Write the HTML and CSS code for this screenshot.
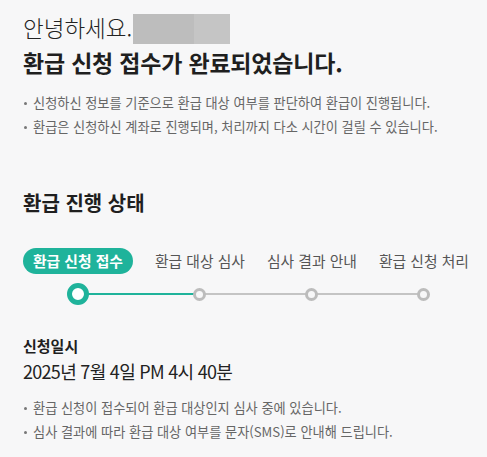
FILE: index.html
```html
<!DOCTYPE html>
<html lang="ko">
<head>
<meta charset="utf-8">
<title>환급 신청 접수</title>
<link rel="stylesheet" href="styles.css">
</head>
<body>
<main class="page">
  <div class="greeting">
    <span class="greeting-text">안녕하세요.</span>
    <span class="redact"><span class="redact-a"></span><span class="redact-b"></span></span>
  </div>
  <h1 class="title">환급 신청 접수가 완료되었습니다.</h1>
  <ul class="notes notes-top">
    <li>신청하신 정보를 기준으로 환급 대상 여부를 판단하여 환급이 진행됩니다.</li>
    <li>환급은 신청하신 계좌로 진행되며, 처리까지 다소 시간이 걸릴 수 있습니다.</li>
  </ul>

  <h2 class="section-title">환급 진행 상태</h2>
  <ol class="stepper">
    <li class="step step-active step-done">
      <span class="step-label">환급 신청 접수</span>
      <span class="step-dot-wrap"><span class="step-dot"></span></span>
    </li>
    <li class="step">
      <span class="step-label">환급 대상 심사</span>
      <span class="step-dot-wrap"><span class="step-dot"></span></span>
    </li>
    <li class="step">
      <span class="step-label">심사 결과 안내</span>
      <span class="step-dot-wrap"><span class="step-dot"></span></span>
    </li>
    <li class="step step-last">
      <span class="step-label">환급 신청 처리</span>
      <span class="step-dot-wrap"><span class="step-dot"></span></span>
    </li>
  </ol>

  <h3 class="info-label">신청일시</h3>
  <p class="info-value">2025년 7월 4일 PM 4시 40분</p>
  <ul class="notes notes-bottom">
    <li>환급 신청이 접수되어 환급 대상인지 심사 중에 있습니다.</li>
    <li>심사 결과에 따라 환급 대상 여부를 문자(SMS)로 안내해 드립니다.</li>
  </ul>
</main>
</body>
</html>
```
FILE: styles.css
```css
html, body {
  margin: 0;
  padding: 0;
  background: #f7f7f8;
}
body {
  font-family: "Noto Sans CJK KR", "Noto Sans", sans-serif;
  color: #1f1f1f;
}
.page {
  padding: 10px 23px 0 23px;
}
.greeting {
  display: flex;
  align-items: flex-start;
  height: 34px;
}
.greeting-text {
  padding-top: 2px;
  font-size: 22.5px;
  font-weight: 300;
  line-height: 30px;
  letter-spacing: 0;
  color: #222;
}
.redact {
  display: flex;
  margin-top: 4px;
  margin-left: 1px;
  height: 30px;
}
.redact-a {
  width: 61px;
  background: #bdbdbd;
}
.redact-b {
  width: 36px;
  background: #c5c5c5;
}
.title {
  margin: 3px 0 0 0;
  font-size: 23px;
  font-weight: 700;
  line-height: 30px;
  letter-spacing: -0.2px;
  color: #1f1f1f;
}
.notes {
  list-style: none;
  margin: 0;
  padding: 0;
}
.notes li {
  position: relative;
  padding-left: 10px;
  font-size: 13.2px;
  line-height: 24px;
  letter-spacing: 0;
  color: #666;
}
.notes li::before {
  content: "";
  position: absolute;
  left: 1px;
  top: 11px;
  width: 3px;
  height: 3px;
  border-radius: 50%;
  background: #777;
}
.notes-top {
  margin-top: 14px;
}
.section-title {
  margin: 50px 0 0 0;
  font-size: 20px;
  font-weight: 700;
  line-height: 28px;
  letter-spacing: 0;
  color: #1f1f1f;
}
.stepper {
  list-style: none;
  margin: 31px 0 0 0;
  padding: 0;
  display: flex;
  gap: 22px;
}
.step {
  display: flex;
  flex-direction: column;
  align-items: center;
  position: relative;
}
.step-label {
  height: 26px;
  line-height: 26px;
  font-size: 14.8px;
  color: #555;
  white-space: nowrap;
}
.step-active .step-label {
  padding: 0 10px;
  border-radius: 13px;
  background: #1fb39b;
  color: #fff;
  font-weight: 700;
}
.step-dot-wrap {
  margin-top: 9px;
  height: 22px;
  display: flex;
  align-items: center;
  justify-content: center;
  position: relative;
}
.step-dot {
  position: relative;
  z-index: 2;
  width: 13px;
  height: 13px;
  box-sizing: border-box;
  border: 3px solid #bcbcbc;
  border-radius: 50%;
  background: #f7f7f8;
}
.step-active .step-dot {
  width: 22px;
  height: 22px;
  border: 5px solid #1fb39b;
  background: #fff;
}
/* connector line from this dot's centre to the next dot's centre */
.step-dot-wrap::after {
  content: "";
  position: absolute;
  z-index: 1;
  left: 50%;
  top: 10px;
  width: 112px;
  height: 2px;
  background: #c4c4c4;
}
.step-done .step-dot-wrap::after {
  width: 122px;
  background: #1fb39b;
}
.step-last .step-dot-wrap::after {
  display: none;
}
.info-label {
  margin: 30px 0 0 0;
  font-size: 15px;
  font-weight: 700;
  line-height: 22px;
  letter-spacing: 0;
  color: #1f1f1f;
}
.info-value {
  margin: 1px 0 0 0;
  font-size: 18px;
  font-weight: 400;
  line-height: 26px;
  letter-spacing: -0.7px;
  color: #222;
}
.notes-bottom {
  margin-top: 12px;
}
```
